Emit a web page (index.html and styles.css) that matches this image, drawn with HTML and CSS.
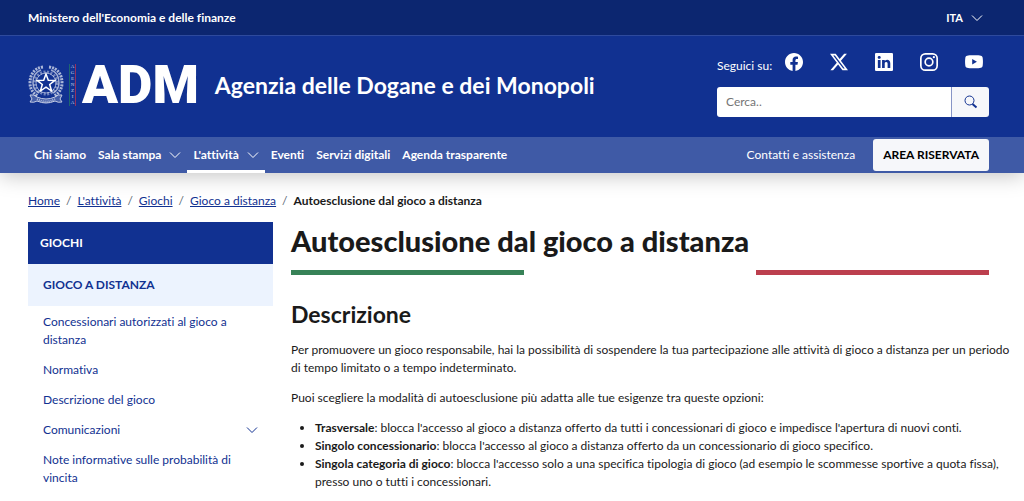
FILE: index.html
```html
<!DOCTYPE html>
<html lang="it">
<head>
    <meta charset="UTF-8">
    <meta name="viewport" content="width=device-width, initial-scale=1.0">
    <title>Autoesclusione dal gioco a distanza - ADM</title>
    <link rel="stylesheet" href="styles.css">
</head>
<body>
    <svg class="sprite" aria-hidden="true">
        <symbol id="chevron" viewBox="0 0 12 8">
            <path d="M1 1.5 L6 6.5 L11 1.5" fill="none" stroke="currentColor" stroke-width="1" />
        </symbol>
    </svg>

    <header class="header">
        <div class="topbar">
            <a class="ministry" href="#">Ministero dell'Economia e delle finanze</a>
            <button class="lang" type="button">ITA <svg class="chevron"><use href="#chevron" /></svg></button>
        </div>

        <div class="brand-row">
            <a class="brand" href="#">
                <svg class="emblem" viewBox="0 0 36 40" aria-hidden="true">
                    <g fill="none" stroke="currentColor">
                        <circle cx="18" cy="18" r="11" stroke-width="3" stroke-dasharray="2 1.5" opacity=".4" />
                        <circle cx="18" cy="18" r="10" stroke-width="1" opacity=".5" />
                        <path d="M15 2 C6 3 2 10 2 18 C2 24 5 28 10 31" stroke-width="3" stroke-dasharray="2 1" opacity=".65" />
                        <path d="M21 2 C30 3 34 10 34 18 C34 24 31 28 26 31" stroke-width="3" stroke-dasharray="2 1" opacity=".65" />
                        <path d="M13 5 C7 7 5 12 5 18 C5 23 7 26 11 28 M23 5 C29 7 31 12 31 18 C31 23 29 26 25 28" stroke-width="1.5" opacity=".6" />
                        <path d="M2 30 Q6 29 9 32 Q18 36 27 32 Q30 29 34 30 L32 34 L34 37 Q30 38 27 36 Q18 40 9 36 Q6 38 2 37 L4 34 Z" stroke-width="1" fill="currentColor" fill-opacity=".3" opacity=".75" />
                        <path d="M9 34 Q18 39 27 34" stroke-width="2" stroke-dasharray="1 1" opacity=".6" />
                        <path d="M18 9 L20.3 15.2 L27 15.4 L21.7 19.5 L23.6 26 L18 22.2 L12.4 26 L14.3 19.5 L9 15.4 L15.7 15.2 Z" stroke-width="1.5" />
                    </g>
                </svg>
                <span class="agency"><i>A</i><i>G</i><i>E</i><i>N</i><i>Z</i><i>I</i><i>A</i></span>
                <span class="adm">ADM</span>
                <span class="brand-name">Agenzia delle Dogane e dei Monopoli</span>
            </a>

            <div class="header-tools">
                <div class="social">
                    <span>Seguici su:</span>
                    <div class="social-links">
                        <a href="#" aria-label="Facebook">
                            <svg viewBox="0 0 16 16"><path d="M16 8.05C16 3.6 12.42 0 8 0S0 3.6 0 8.05c0 4.02 2.93 7.35 6.75 7.95v-5.62H4.72V8.05h2.03V6.28c0-2.02 1.2-3.13 3.02-3.13.88 0 1.8.16 1.8.16v1.98h-1.02c-1 0-1.3.62-1.3 1.26v1.5h2.22l-.35 2.33H9.25V16C13.07 15.4 16 12.07 16 8.05z" /></svg>
                        </a>
                        <a href="#" aria-label="X">
                            <svg viewBox="0 0 16 16"><path d="M12.6.75h2.45l-5.36 6.14L16 15.25h-4.94L7.2 10.19l-4.42 5.06H.32l5.73-6.57L0 .75h5.06l3.5 4.63zM11.74 13.8h1.36L4.32 2.13H2.86z" /></svg>
                        </a>
                        <a href="#" aria-label="LinkedIn">
                            <svg viewBox="0 0 16 16"><path d="M0 1.15C0 .5.53 0 1.18 0h13.64C15.47 0 16 .5 16 1.15v13.7c0 .64-.53 1.15-1.18 1.15H1.18C.53 16 0 15.5 0 14.85zM4.94 13.4V6.17h-2.4v7.23zM3.74 5.18c.84 0 1.36-.55 1.36-1.25-.02-.7-.52-1.25-1.34-1.25S2.4 3.23 2.4 3.93c0 .7.52 1.25 1.33 1.25zm4.91 8.22V9.36c0-.22.02-.43.08-.59.18-.43.57-.88 1.24-.88.87 0 1.22.67 1.22 1.65v3.86h2.4V9.25c0-2.22-1.18-3.25-2.76-3.25-1.27 0-1.85.7-2.16 1.19V6.17h-2.4v7.23z" /></svg>
                        </a>
                        <a href="#" aria-label="Instagram">
                            <svg viewBox="0 0 16 16"><rect x=".75" y=".75" width="14.5" height="14.5" rx="4" fill="none" stroke="currentColor" stroke-width="1.5" /><circle cx="8" cy="8" r="3.4" fill="none" stroke="currentColor" stroke-width="1.5" /><circle cx="12.3" cy="3.7" r="1" /></svg>
                        </a>
                        <a href="#" aria-label="YouTube">
                            <svg viewBox="0 0 16 16"><path fill-rule="evenodd" d="M8 2C14.5 2 15.3 2.3 15.7 4.2Q16.2 8 15.7 11.3C15.3 13.2 14.5 13.5 8 13.5S.7 13.2.3 11.3Q-.2 8 .3 4.2C.7 2.3 1.5 2 8 2zM6.4 5.3v4.9l4.2-2.45z" /></svg>
                        </a>
                    </div>
                </div>
                <form class="search" role="search">
                    <input type="search" placeholder="Cerca.." aria-label="Cerca">
                    <button type="button" aria-label="Avvia ricerca">
                        <svg viewBox="0 0 14 14"><circle cx="5.5" cy="5.5" r="4.5" fill="none" stroke="currentColor" /><path d="M8.5 9 L12.5 12.5" stroke="currentColor" stroke-width="2" /></svg>
                    </button>
                </form>
            </div>
        </div>

        <nav class="navbar" aria-label="Principale">
            <ul class="menu">
                <li><a href="#">Chi siamo</a></li>
                <li><a href="#">Sala stampa <svg class="chevron"><use href="#chevron" /></svg></a></li>
                <li><a class="active" href="#">L'attività <svg class="chevron"><use href="#chevron" /></svg></a></li>
                <li><a href="#">Eventi</a></li>
                <li><a href="#">Servizi digitali</a></li>
                <li><a href="#">Agenda trasparente</a></li>
            </ul>
            <div class="nav-right">
                <a href="#">Contatti e assistenza</a>
                <button class="reserved" type="button">AREA RISERVATA</button>
            </div>
        </nav>
    </header>

    <div class="page">
        <nav aria-label="Percorso">
            <ol class="breadcrumb">
                <li><a href="#">Home</a></li>
                <li><a href="#">L'attività</a></li>
                <li><a href="#">Giochi</a></li>
                <li><a href="#">Gioco a distanza</a></li>
                <li aria-current="page">Autoesclusione dal gioco a distanza</li>
            </ol>
        </nav>

        <div class="columns">
            <aside class="sidebar">
                <a class="side-title" href="#">GIOCHI</a>
                <a class="side-section" href="#">GIOCO A DISTANZA</a>
                <ul>
                    <li><a href="#">Concessionari autorizzati al gioco a distanza</a></li>
                    <li><a href="#">Normativa</a></li>
                    <li><a href="#">Descrizione del gioco</a></li>
                    <li><a href="#">Comunicazioni <svg class="chevron"><use href="#chevron" /></svg></a></li>
                    <li><a href="#">Note informative sulle probabilità di vincita</a></li>
                </ul>
            </aside>

            <main>
                <h1>Autoesclusione dal gioco a distanza</h1>
                <div class="flag"><span class="green"></span><span></span><span class="red"></span></div>
                <h2>Descrizione</h2>
                <div class="text">
                    <p>Per promuovere un gioco responsabile, hai la possibilità di sospendere la tua partecipazione alle attività di gioco a distanza per un periodo di tempo limitato o a tempo indeterminato.</p>
                    <p>Puoi scegliere la modalità di autoesclusione più adatta alle tue esigenze tra queste opzioni:</p>
                    <ul>
                        <li><strong>Trasversale</strong>: blocca l'accesso al gioco a distanza offerto da tutti i concessionari di gioco e impedisce l'apertura di nuovi conti.</li>
                        <li><strong>Singolo concessionario</strong>: blocca l'accesso al gioco a distanza offerto da un concessionario di gioco specifico.</li>
                        <li><strong>Singola categoria di gioco</strong>: blocca l'accesso solo a una specifica tipologia di gioco (ad esempio le scommesse sportive a quota fissa), presso uno o tutti i concessionari.</li>
                    </ul>
                </div>
            </main>
        </div>
    </div>
</body>
</html>
```

FILE: styles.css
```css
* {
    margin: 0;
    padding: 0;
    box-sizing: border-box;
}
body {
    font-family: Lato, "Open Sans", sans-serif;
    font-size: 12px;
    line-height: 18px;
    font-variant-ligatures: none;
    color: #1a1a1a;
    background: #fff;
}
a {
    color: inherit;
    text-decoration: none;
}
ul, ol {
    list-style: none;
}
button, input {
    font: inherit;
    border: 0;
}
button {
    cursor: pointer;
}
.sprite {
    display: none;
}
.chevron {
    width: 12px;
    height: 8px;
    flex: none;
}

/* header */
.header {
    color: #fff;
    background: #113191;
    box-shadow: 0 2px 20px rgba(0, 0, 0, 0.25);
}
.topbar, .brand-row, .navbar {
    display: flex;
    align-items: center;
    justify-content: space-between;
    padding: 0 35px 0 28px;
}
.topbar {
    height: 36px;
    background: #0c2670;
    border-bottom: 1px solid #2e4a9d;
}
.ministry {
    font-weight: bold;
}
.lang {
    display: flex;
    align-items: center;
    gap: 8px;
    padding: 0 6px;
    color: #fff;
    background: none;
    font-size: 11px;
    font-weight: bold;
}
.brand-row {
    min-height: 101px;
    padding-bottom: 4px;
}
.brand {
    display: flex;
    align-items: center;
}
.emblem {
    width: 36px;
    height: 40px;
}
.agency {
    display: flex;
    flex-direction: column;
    align-items: center;
    width: 7px;
    margin: 0 6px 0 5px;
    border-left: 1px solid #1d6670;
    border-right: 1px solid #96305f;
}
.agency i {
    font: 5px/6px "Liberation Serif", serif;
    height: 6px;
    opacity: 0.75;
}
.adm {
    font: 900 53px/54px Roboto, sans-serif;
}
.brand-name {
    margin-left: 16px;
    font-size: 23px;
    line-height: 30px;
    font-weight: bold;
}
.header-tools {
    width: 272px;
}
.social {
    display: flex;
    align-items: flex-end;
    justify-content: space-between;
    padding-right: 6px;
    margin-bottom: 12px;
}
.social-links {
    display: flex;
    gap: 27px;
    margin-bottom: 4px;
}
.social svg {
    display: block;
    width: 18px;
    height: 18px;
    fill: currentColor;
}
.search {
    display: flex;
    height: 30px;
    overflow: hidden;
    border-radius: 3px;
}
.search input {
    flex: 1;
    min-width: 0;
    padding: 0 9px;
    background: #fff;
}
.search input::placeholder {
    color: #757575;
}
.search button {
    width: 38px;
    color: #113191;
    background: #f6f7fa;
    border-left: 1px solid #8795c6;
}
.search svg {
    width: 14px;
    height: 14px;
    vertical-align: middle;
}

/* main navigation */
.navbar {
    height: 36px;
    background: #3f5aa6;
}
.menu {
    display: flex;
    height: 100%;
}
.menu a {
    display: flex;
    align-items: center;
    gap: 8px;
    height: 100%;
    padding: 0 6px;
    font-weight: bold;
}
.menu .active {
    box-shadow: inset 0 -3px #fff;
}
.nav-right {
    display: flex;
    align-items: center;
    gap: 18px;
}
.reserved {
    height: 32px;
    padding: 0 10px;
    color: #000;
    background: #f6f7fa;
    border-radius: 3px;
    font-weight: bold;
}

/* page */
.page {
    padding: 19px 35px 0 28px;
}
.breadcrumb {
    display: flex;
}
.breadcrumb li + li::before {
    content: "/";
    padding: 0 6px;
    font-weight: normal;
    color: #5a6772;
}
.breadcrumb a {
    color: #113191;
    text-decoration: underline;
}
.breadcrumb [aria-current] {
    font-weight: bold;
}
.columns {
    display: grid;
    grid-template-columns: 245px minmax(0, 1fr);
    gap: 18px;
    margin-top: 12px;
}

/* sidebar */
.side-title, .side-section {
    display: block;
    padding: 12px;
    font-weight: bold;
}
.side-title {
    color: #fff;
    background: #113191;
}
.side-section {
    padding: 12px 15px;
    color: #113191;
    background: #ecf3fe;
}
.sidebar ul {
    padding-top: 1px;
}
.sidebar li a {
    display: flex;
    align-items: center;
    justify-content: space-between;
    padding: 6px 15px;
    color: #113191;
}

/* content */
h1 {
    font-size: 29px;
    line-height: 38px;
    font-weight: 900;
}
.flag {
    display: grid;
    grid-template-columns: repeat(3, 1fr);
    height: 5px;
    margin-top: 10px;
}
.green {
    background: #378257;
}
.red {
    background: #bc3f4e;
}
h2 {
    margin: 24px 0 12px;
    font-size: 23px;
    line-height: 30px;
    font-weight: bold;
}
.text {
    margin-right: -28px;
}
.text p {
    margin-bottom: 12px;
}
.text ul {
    padding-left: 24px;
    list-style: disc;
}
```
